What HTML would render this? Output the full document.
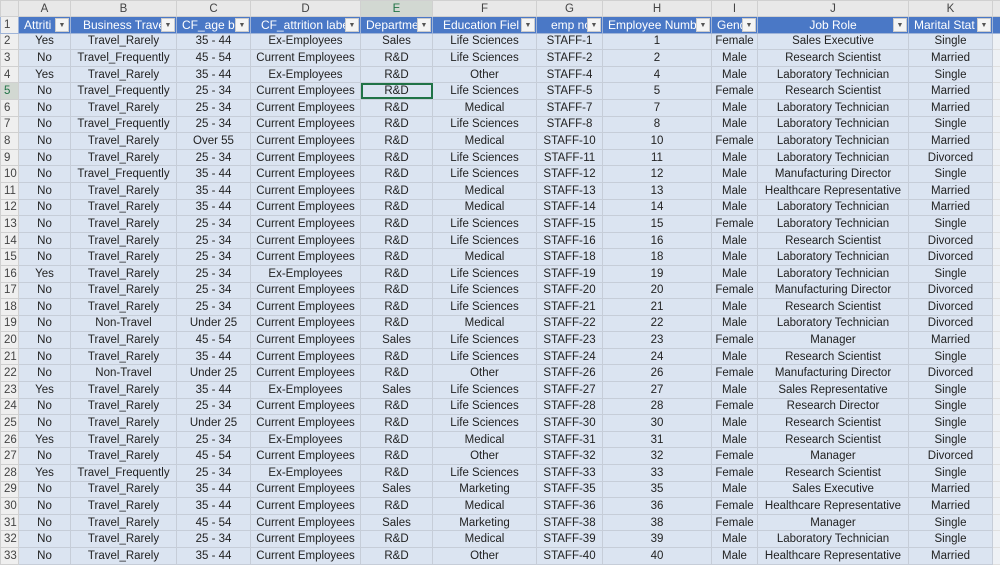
<!DOCTYPE html><html><head><meta charset="utf-8"><style>
body{margin:0;width:1000px;height:564px;overflow:hidden;background:#fff;font-family:"Liberation Sans",sans-serif;font-size:11.5px;color:#222}
table{border-collapse:collapse;table-layout:fixed;position:absolute;left:0;top:0;width:1012px}
td{height:15.6px;padding:0;border:1px solid #c6cdd8;text-align:center;white-space:nowrap;overflow:hidden;background:#dbe4f1;line-height:14px}
tr.ch td{background:#e8e8e8;border-color:#d0d0d0;color:#444;height:15px}
td.rn{background:#efefef;border-color:#d0d0d0;color:#444;text-align:left;padding-left:3px}
tr.h td{background:#4a78c6;color:#fff;border-color:#9fb4d8;position:relative;text-align:left;padding-left:5px;font-size:12px}
tr.h td.rn{background:#efefef;color:#444;padding-left:3px;font-size:11.5px}
.dd{position:absolute;right:1px;top:1px;width:14px;height:14px;background:#f4f4f4;border:1px solid #ccc;box-sizing:border-box;color:#555;font-size:7px;line-height:13px;text-align:center}
td.L{background:#eef1f5;border-color:#e0e0e0}
td.sel{outline:2px solid #217346;outline-offset:-2px}
</style></head><body>
<table id="t">
<colgroup><col style="width:18px"><col style="width:52px"><col style="width:106px"><col style="width:74px"><col style="width:110px"><col style="width:72px"><col style="width:104px"><col style="width:66px"><col style="width:109px"><col style="width:46px"><col style="width:151px"><col style="width:84px"><col style="width:20px"></colgroup>
<tr class="ch"><td class="rn"></td><td>A</td><td>B</td><td>C</td><td>D</td><td style="background:#d2d8d2;color:#217346">E</td><td>F</td><td>G</td><td>H</td><td>I</td><td>J</td><td>K</td><td></td></tr>
<tr class="h"><td class="rn">1</td><td>Attriti<span class="dd">▼</span></td><td style="padding-left:12px">Business Trave<span class="dd">▼</span></td><td>CF_age ba<span class="dd">▼</span></td><td style="padding-left:10px">CF_attrition labe<span class="dd">▼</span></td><td>Departme<span class="dd">▼</span></td><td style="padding-left:10px">Education Fiel<span class="dd">▼</span></td><td style="padding-left:14px">emp no<span class="dd">▼</span></td><td>Employee Numb<span class="dd">▼</span></td><td>Gend<span class="dd">▼</span></td><td style="text-align:center;padding-left:0">Job Role<span class="dd">▼</span></td><td>Marital Stat<span class="dd">▼</span></td><td class="L"></td></tr>
</table>
<script>
var d=`Yes|Travel_Rarely|35 - 44|Ex-Employees|Sales|Life Sciences|STAFF-1|1|Female|Sales Executive|Single
No|Travel_Frequently|45 - 54|Current Employees|R&D|Life Sciences|STAFF-2|2|Male|Research Scientist|Married
Yes|Travel_Rarely|35 - 44|Ex-Employees|R&D|Other|STAFF-4|4|Male|Laboratory Technician|Single
No|Travel_Frequently|25 - 34|Current Employees|R&D|Life Sciences|STAFF-5|5|Female|Research Scientist|Married
No|Travel_Rarely|25 - 34|Current Employees|R&D|Medical|STAFF-7|7|Male|Laboratory Technician|Married
No|Travel_Frequently|25 - 34|Current Employees|R&D|Life Sciences|STAFF-8|8|Male|Laboratory Technician|Single
No|Travel_Rarely|Over 55|Current Employees|R&D|Medical|STAFF-10|10|Female|Laboratory Technician|Married
No|Travel_Rarely|25 - 34|Current Employees|R&D|Life Sciences|STAFF-11|11|Male|Laboratory Technician|Divorced
No|Travel_Frequently|35 - 44|Current Employees|R&D|Life Sciences|STAFF-12|12|Male|Manufacturing Director|Single
No|Travel_Rarely|35 - 44|Current Employees|R&D|Medical|STAFF-13|13|Male|Healthcare Representative|Married
No|Travel_Rarely|35 - 44|Current Employees|R&D|Medical|STAFF-14|14|Male|Laboratory Technician|Married
No|Travel_Rarely|25 - 34|Current Employees|R&D|Life Sciences|STAFF-15|15|Female|Laboratory Technician|Single
No|Travel_Rarely|25 - 34|Current Employees|R&D|Life Sciences|STAFF-16|16|Male|Research Scientist|Divorced
No|Travel_Rarely|25 - 34|Current Employees|R&D|Medical|STAFF-18|18|Male|Laboratory Technician|Divorced
Yes|Travel_Rarely|25 - 34|Ex-Employees|R&D|Life Sciences|STAFF-19|19|Male|Laboratory Technician|Single
No|Travel_Rarely|25 - 34|Current Employees|R&D|Life Sciences|STAFF-20|20|Female|Manufacturing Director|Divorced
No|Travel_Rarely|25 - 34|Current Employees|R&D|Life Sciences|STAFF-21|21|Male|Research Scientist|Divorced
No|Non-Travel|Under 25|Current Employees|R&D|Medical|STAFF-22|22|Male|Laboratory Technician|Divorced
No|Travel_Rarely|45 - 54|Current Employees|Sales|Life Sciences|STAFF-23|23|Female|Manager|Married
No|Travel_Rarely|35 - 44|Current Employees|R&D|Life Sciences|STAFF-24|24|Male|Research Scientist|Single
No|Non-Travel|Under 25|Current Employees|R&D|Other|STAFF-26|26|Female|Manufacturing Director|Divorced
Yes|Travel_Rarely|35 - 44|Ex-Employees|Sales|Life Sciences|STAFF-27|27|Male|Sales Representative|Single
No|Travel_Rarely|25 - 34|Current Employees|R&D|Life Sciences|STAFF-28|28|Female|Research Director|Single
No|Travel_Rarely|Under 25|Current Employees|R&D|Life Sciences|STAFF-30|30|Male|Research Scientist|Single
Yes|Travel_Rarely|25 - 34|Ex-Employees|R&D|Medical|STAFF-31|31|Male|Research Scientist|Single
No|Travel_Rarely|45 - 54|Current Employees|R&D|Other|STAFF-32|32|Female|Manager|Divorced
Yes|Travel_Frequently|25 - 34|Ex-Employees|R&D|Life Sciences|STAFF-33|33|Female|Research Scientist|Single
No|Travel_Rarely|35 - 44|Current Employees|Sales|Marketing|STAFF-35|35|Male|Sales Executive|Married
No|Travel_Rarely|35 - 44|Current Employees|R&D|Medical|STAFF-36|36|Female|Healthcare Representative|Married
No|Travel_Rarely|45 - 54|Current Employees|Sales|Marketing|STAFF-38|38|Female|Manager|Single
No|Travel_Rarely|25 - 34|Current Employees|R&D|Medical|STAFF-39|39|Male|Laboratory Technician|Single
No|Travel_Rarely|35 - 44|Current Employees|R&D|Other|STAFF-40|40|Male|Healthcare Representative|Married`.split("\n");
var t=document.getElementById("t");
d.forEach(function(l,i){var r=t.insertRow(),c=r.insertCell();c.className="rn";c.textContent=i+2;
if(i==3){c.style.background="#d2d8d2";c.style.color="#217346";}
l.split("|").forEach(function(v,j){var x=r.insertCell();x.textContent=v;if(i==3&&j==4)x.className="sel";});
r.insertCell().className="L";});
</script>
</body></html>
